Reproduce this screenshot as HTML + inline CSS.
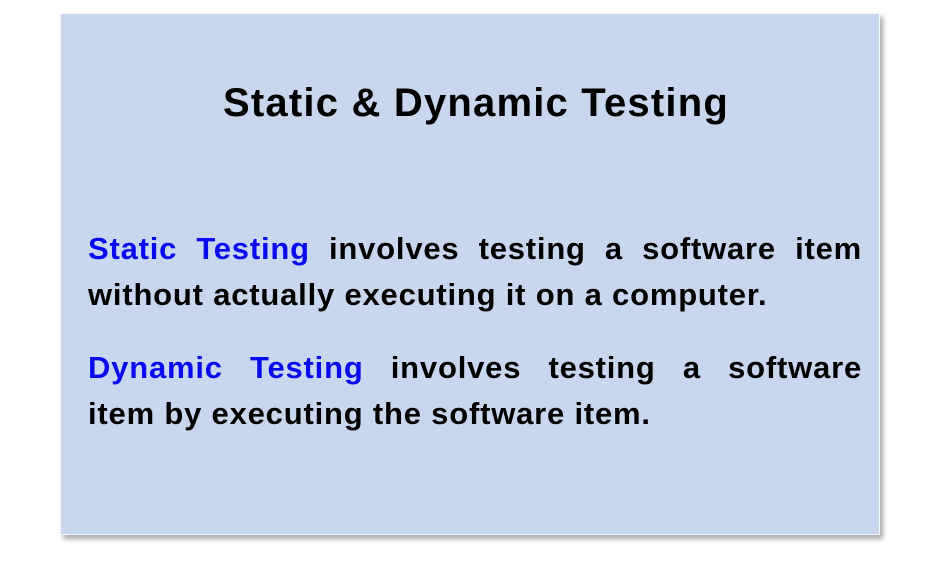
<!DOCTYPE html>
<html><head><style>
body{margin:0;width:926px;height:574px;background:#fff;position:relative;overflow:hidden;font-family:"Liberation Sans",sans-serif;font-weight:bold}
.box{position:absolute;left:60px;top:13px;width:818px;height:520px;background:#c9d7ee;border:1px solid #f4f7fc;box-shadow:3px 4px 5px rgba(0,0,0,.35)}
.t{position:absolute;left:26px;width:900px;top:81px;text-align:center;font-size:40px;letter-spacing:1.2px;color:#000}
.l{position:absolute;left:88px;width:774px;font-size:31px;letter-spacing:0.8px;color:#000;white-space:nowrap}
.j{text-align:justify;text-align-last:justify;white-space:normal}
.b{color:#0a0aee}
</style></head><body>
<div class="box"></div>
<div class="t">Static &amp; Dynamic Testing</div>
<div class="l j" style="top:231px"><span class="b">Static Testing</span> involves testing a software item</div>
<div class="l" style="top:277px">without actually executing it on a computer.</div>
<div class="l j" style="top:350px"><span class="b">Dynamic Testing</span> involves testing a software</div>
<div class="l" style="top:396px">item by executing the software item.</div>
</body></html>
